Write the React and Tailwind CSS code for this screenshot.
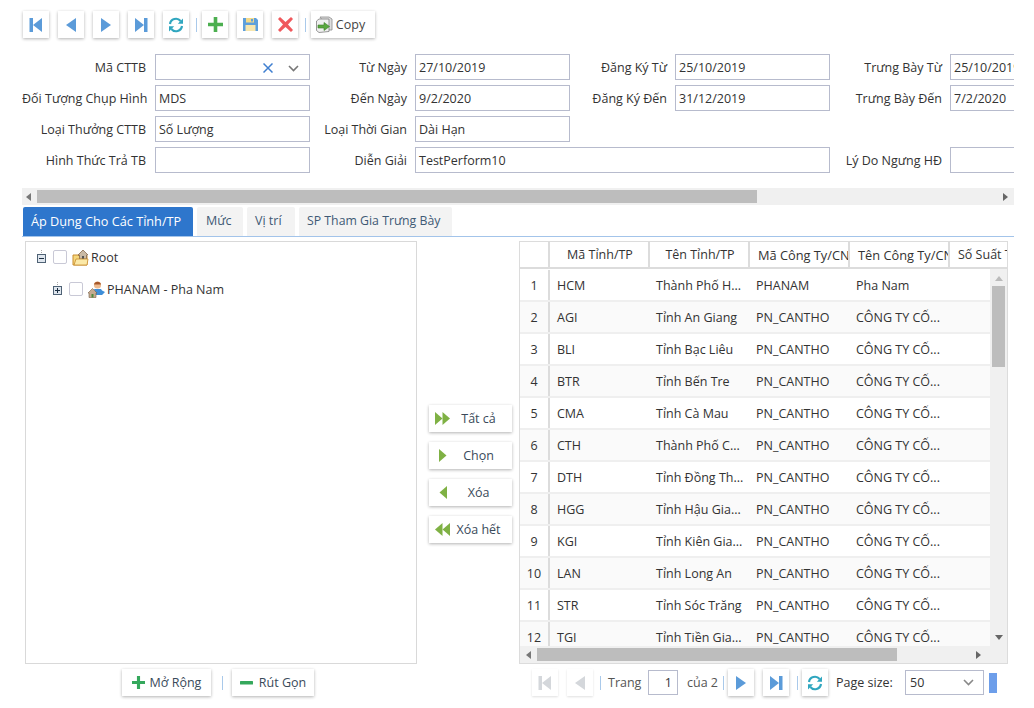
const font = { fontFamily: '"Open Sans", "Noto Sans", sans-serif' };

const Blue = "#5b9bd9";
const First = ({ c = Blue }) => (
  <svg width="14" height="16" viewBox="0 0 14 16"><rect x="0.5" y="1" width="3.5" height="14" fill={c} /><path d="M13 1v14L4 8z" fill={c} /></svg>
);
const Prev = ({ c = Blue }) => (
  <svg width="12" height="16" viewBox="0 0 12 16"><path d="M11 1v14L1 8z" fill={c} /></svg>
);
const Next = ({ c = Blue }) => (
  <svg width="12" height="16" viewBox="0 0 12 16"><path d="M1 1v14L11 8z" fill={c} /></svg>
);
const Last = ({ c = Blue }) => (
  <svg width="14" height="16" viewBox="0 0 14 16"><rect x="10" y="1" width="3.5" height="14" fill={c} /><path d="M1 1v14L10 8z" fill={c} /></svg>
);
const Refresh = () => (
  <svg width="16" height="16" viewBox="0 0 16 16" fill="none">
    <path d="M2 7A6 6 0 0 1 12.6 4" stroke="#2fa6bf" strokeWidth="2.2" />
    <path d="M15 1.5v5.2H9.8z" fill="#2fa6bf" />
    <path d="M14 9A6 6 0 0 1 3.4 12" stroke="#2fa6bf" strokeWidth="2.2" />
    <path d="M1 14.5V9.3h5.2z" fill="#2fa6bf" />
  </svg>
);
const Plus = ({ s = 15, c = "#4caf50" }) => (
  <svg width={s} height={s} viewBox="0 0 15 15"><path d="M5.7 0h3.6v5.7H15v3.6H9.3V15H5.7V9.3H0V5.7h5.7z" fill={c} /></svg>
);
const Minus = () => (
  <svg width="13" height="13" viewBox="0 0 13 13"><rect y="5" width="13" height="3.4" rx="0.5" fill="#35a85c" /></svg>
);
const Save = () => (
  <svg width="15" height="15" viewBox="0 0 15 15">
    <path d="M0 1h13l2 2v11H0z" fill="#5d9fdc" />
    <rect x="3" y="1" width="8" height="4.5" fill="#f2d98b" />
    <rect x="8" y="2" width="2" height="2.5" fill="#5d9fdc" />
    <rect x="2.5" y="8" width="10" height="6" fill="#f7e6ae" />
  </svg>
);
const Cross = () => (
  <svg width="15" height="15" viewBox="0 0 15 15"><path d="M2 0l5.5 5 5.5-5 2 2-5 5.5 5 5.5-2 2-5.5-5-5.5 5-2-2 5-5.5-5-5.5z" fill="#f0585c" /></svg>
);
const CopyIcon = () => (
  <svg width="17" height="17" viewBox="0 0 17 17">
    <path d="M4 1h9l3 2v11h-3z" fill="#dedede" stroke="#8a8a8a" strokeWidth="0.8" />
    <path d="M0.5 5l2.5-2h10v12.5l-10 1-2.5-2z" fill="#f0f0f0" stroke="#7d7d7d" strokeWidth="0.8" />
    <path d="M2 9h6V6.5l5.5 4-5.5 4V12H2z" fill="#5aa83f" stroke="#3c7d2a" strokeWidth="0.6" />
  </svg>
);
const ArrowsR = ({ two }) => (
  <svg width={two ? 15 : 8} height="13" viewBox={two ? "0 0 15 13" : "0 0 8 13"}>
    <path d="M0 0l7.5 6.5L0 13z" fill="#7fb144" />
    {two && <path d="M7.5 0L15 6.5 7.5 13z" fill="#7fb144" />}
  </svg>
);
const ArrowsL = ({ two }) => (
  <svg width={two ? 15 : 8} height="13" viewBox={two ? "0 0 15 13" : "0 0 8 13"}>
    <path d={two ? "M7.5 0L0 6.5 7.5 13z" : "M8 0L0.5 6.5 8 13z"} fill="#7fb144" />
    {two && <path d="M15 0L7.5 6.5 15 13z" fill="#7fb144" />}
  </svg>
);
const Chevron = ({ c = "#777" }) => (
  <svg width="11" height="7" viewBox="0 0 11 7" fill="none"><path d="M1 1l4.5 4.5L10 1" stroke={c} strokeWidth="1.6" /></svg>
);
const Tri = ({ d, c = "#666" }) => {
  const p = { l: "M5 0v8L0 4z", r: "M0 0v8l5-4z", u: "M0 5h8L4 0z", dn: "M0 0h8L4 5z" }[d];
  const w = d === "l" || d === "r" ? 5 : 8;
  const h = d === "l" || d === "r" ? 8 : 5;
  return <svg width={w} height={h} viewBox={`0 0 ${w} ${h}`}><path d={p} fill={c} /></svg>;
};
const Expander = ({ plus }) => (
  <svg width="9" height="14" viewBox="0 0 9 14" className="shrink-0">
    <path d="M4.5 0v4" stroke="#aaa" strokeDasharray="1 1" />
    <rect x="0.5" y="4.5" width="8" height="8" fill="#dfe6ee" stroke="#4f6275" />
    <path d="M2 8.5h5" stroke="#1c2f42" />
    {plus && <path d="M4.5 6v5" stroke="#1c2f42" />}
  </svg>
);
const FolderHouse = () => (
  <svg width="17" height="17" viewBox="0 0 17 17" className="shrink-0">
    <path d="M1 6h5l1 1h8v9H1z" fill="#f5d77d" stroke="#c98d2f" />
    <path d="M6 6l5-5 5 5h-1.5v4h-7V6z" fill="#c9b9a4" stroke="#8a6b4d" strokeWidth="0.8" />
    <rect x="10" y="7" width="2" height="3" fill="#555" />
    <path d="M4 10h12l-1 6H2z" fill="#fbe9a8" stroke="#c98d2f" strokeWidth="0.8" />
  </svg>
);
const PersonHouse = () => (
  <svg width="17" height="17" viewBox="0 0 17 17" className="shrink-0">
    <circle cx="9.5" cy="4" r="3.6" fill="#edbb90" />
    <path d="M6 3.4a3.6 3.6 0 0 1 7 0z" fill="#a5582a" />
    <path d="M6 8h7l1 1.5L17 11l-3 3H8z" fill="#3e8ed8" />
    <path d="M0 12l4.5-4.5L9 12H8v4.5H1V12z" fill="#c4aa90" stroke="#7a6148" strokeWidth="0.6" />
    <rect x="3.5" y="13" width="2" height="3.5" fill="#4f8a3c" />
  </svg>
);

const Btn = ({ children, className = "", faded }) => (
  <button className={`flex items-center justify-center h-[27px] bg-white shrink-0 ${faded ? "shadow-[0_1px_2px_rgba(0,0,0,0.12)]" : "shadow-[0_1px_3px_rgba(0,0,0,0.3)]"} ${className}`}>
    {children}
  </button>
);
const Sep = ({ h = "h-[14px]" }) => <div className={`w-px ${h} bg-[#a9c9ea] shrink-0`} />;

const Label = ({ children, first }) => (
  <div className={`text-right ${first ? "pr-[9px]" : "pr-[8px]"} pt-[2px] self-center whitespace-nowrap text-[#333]`}>{children}</div>
);
const Field = ({ children, className = "" }) => (
  <div className={`h-[26px] border border-[#b7bbcd] bg-white flex items-center px-[3px] pt-[2px] text-[#333] whitespace-nowrap overflow-hidden ${className}`}>{children}</div>
);

const rows = [
  ["1", "HCM", "Thành Phố H...", "PHANAM", "Pha Nam"],
  ["2", "AGI", "Tỉnh An Giang", "PN_CANTHO", "CÔNG TY CỐ..."],
  ["3", "BLI", "Tỉnh Bạc Liêu", "PN_CANTHO", "CÔNG TY CỐ..."],
  ["4", "BTR", "Tỉnh Bến Tre", "PN_CANTHO", "CÔNG TY CỐ..."],
  ["5", "CMA", "Tỉnh Cà Mau", "PN_CANTHO", "CÔNG TY CỐ..."],
  ["6", "CTH", "Thành Phố C...", "PN_CANTHO", "CÔNG TY CỐ..."],
  ["7", "DTH", "Tỉnh Đồng Th...", "PN_CANTHO", "CÔNG TY CỐ..."],
  ["8", "HGG", "Tỉnh Hậu Gia...", "PN_CANTHO", "CÔNG TY CỐ..."],
  ["9", "KGI", "Tỉnh Kiên Gia...", "PN_CANTHO", "CÔNG TY CỐ..."],
  ["10", "LAN", "Tỉnh Long An", "PN_CANTHO", "CÔNG TY CỐ..."],
  ["11", "STR", "Tỉnh Sóc Trăng", "PN_CANTHO", "CÔNG TY CỐ..."],
  ["12", "TGI", "Tỉnh Tiền Gia...", "PN_CANTHO", "CÔNG TY CỐ..."],
];

const Side = ({ icon, children }) => (
  <button className="flex items-center justify-center w-[83px] h-[27px] bg-white shadow-[0_1px_3px_rgba(0,0,0,0.3)] text-[#3a4a5a]">
    <span className="flex justify-center items-center w-[24px] shrink-0 pl-[3px]">{icon}</span>
    <span className="flex-1 text-center pr-[8px] pt-[2px] font-medium text-[12.5px] whitespace-nowrap">{children}</span>
  </button>
);

export default function App() {
  return (
    <div style={font} className="w-[1034px] h-[708px] overflow-hidden bg-white text-[12.5px] leading-none pl-[22px] pr-[20px] pt-[11px] text-[#333]">
      {/* Toolbar */}
      <div className="flex items-center ml-px h-[27px]">
        <div className="flex gap-[9px]">
          <Btn className="w-[26px]"><First /></Btn>
          <Btn className="w-[26px]"><Prev /></Btn>
          <Btn className="w-[26px]"><Next /></Btn>
          <Btn className="w-[26px]"><Last /></Btn>
          <Btn className="w-[26px]"><Refresh /></Btn>
        </div>
        <div className="ml-[7px] mr-[5px]"><Sep /></div>
        <div className="flex gap-[9px]">
          <Btn className="w-[26px]"><Plus /></Btn>
          <Btn className="w-[26px]"><Save /></Btn>
          <Btn className="w-[26px]"><Cross /></Btn>
        </div>
        <div className="ml-[7px] mr-[5px]"><Sep /></div>
        <Btn className="w-[64px] gap-[3px] font-medium text-[12.5px] text-[#444] pr-[5px]"><CopyIcon /><span className="pt-[2px]">Copy</span></Btn>
      </div>

      {/* Form */}
      <div className="overflow-hidden mt-[16px]">
        <div className="grid grid-cols-[133px_155px_105px_155px_105px_155px_120px_155px] gap-y-[5px] w-[1083px]">
          <Label first>Mã CTTB</Label>
          <Field className="border-[#2f7cc9] justify-between pr-[10px] pl-[3px] pt-0">
            <span />
            <span className="flex items-center gap-[15px]">
              <svg width="10" height="10" viewBox="0 0 10 10" fill="none"><path d="M0.5 0.5l9 9M9.5 0.5l-9 9" stroke="#3f7fd0" strokeWidth="1.5" /></svg>
              <Chevron />
            </span>
          </Field>
          <Label>Từ Ngày</Label><Field>27/10/2019</Field>
          <Label>Đăng Ký Từ</Label><Field>25/10/2019</Field>
          <Label>Trưng Bày Từ</Label><Field>25/10/2019</Field>

          <Label first>Đối Tượng Chụp Hình</Label><Field>MDS</Field>
          <Label>Đến Ngày</Label><Field>9/2/2020</Field>
          <Label>Đăng Ký Đến</Label><Field>31/12/2019</Field>
          <Label>Trưng Bày Đến</Label><Field>7/2/2020</Field>

          <Label first>Loại Thưởng CTTB</Label><Field>Số Lượng</Field>
          <Label>Loại Thời Gian</Label><Field>Dài Hạn</Field>
          <div className="col-span-4" />

          <Label first>Hình Thức Trả TB</Label><Field />
          <Label>Diễn Giải</Label><Field className="col-span-3">TestPerform10</Field>
          <Label>Lý Do Ngưng HĐ</Label><Field />
        </div>
      </div>

      {/* Form scrollbar */}
      <div className="mt-[15px] h-[17px] bg-[#f0f0f0] flex items-center">
        <div className="w-[15px] flex justify-center pr-[2px]"><Tri d="l" c="#777" /></div>
        <div className="w-[720px] h-[13px] bg-[#bdbdbd]" />
        <div className="flex-1 flex justify-end pr-[6px]"><Tri d="r" /></div>
      </div>

      {/* Tabs */}
      <div className="mt-[2px] h-[30px] flex items-stretch gap-[4px] pl-px border-b border-[#a3c4ea] text-[#3f5a75]">
        <div className="w-[170px] h-[29px] bg-[#2e76cc] text-white rounded-t-[2px] flex items-center pl-[8px] whitespace-nowrap text-[12.7px]">Áp Dụng Cho Các Tỉnh/TP</div>
        <div className="w-[46px] h-[29px] bg-[#f3f3f3] rounded-t-[2px] flex items-center pl-[9px]">Mức</div>
        <div className="w-[48px] h-[29px] bg-[#f3f3f3] rounded-t-[2px] flex items-center pl-[8px]">Vị trí</div>
        <div className="w-[153px] h-[29px] bg-[#f3f3f3] rounded-t-[2px] flex items-center pl-[8px] whitespace-nowrap text-[12.3px]">SP Tham Gia Trưng Bày</div>
      </div>

      {/* Panels */}
      <div className="flex mt-[4px] ml-[3px]">
        {/* Left */}
        <div className="w-[392px] shrink-0">
          <div className="h-[423px] border border-[#d9d9d9] pt-[5px] text-[#333]">
            <div className="flex items-center h-[20px] pl-[11px]">
              <Expander />
              <span className="ml-[7px] w-[14px] h-[14px] border border-[#c9c9d6] rounded-[2px] shrink-0" />
              <span className="ml-[5px]"><FolderHouse /></span>
              <span className="ml-[2px] pt-[2px]">Root</span>
            </div>
            <div className="flex items-center h-[20px] pl-[27px] mt-[12px]">
              <Expander plus />
              <span className="ml-[7px] w-[14px] h-[14px] border border-[#c9c9d6] rounded-[2px] shrink-0" />
              <span className="ml-[5px]"><PersonHouse /></span>
              <span className="ml-[2px] pt-[2px] whitespace-nowrap">PHANAM - Pha Nam</span>
            </div>
          </div>
          <div className="flex items-center justify-center mt-[5px] pl-[31px] pr-[37px]">
            <Btn className="w-[89px] h-[26px] gap-[5px] font-medium text-[12.5px] text-[#3a4a5a]"><Plus s={13} c="#35a85c" /><span className="pt-[2px]">Mở Rộng</span></Btn>
            <div className="ml-[11px] mr-[9px]"><Sep /></div>
            <Btn className="w-[82px] h-[26px] gap-[6px] font-medium text-[12.5px] text-[#3a4a5a]"><Minus /><span className="pt-[2px]">Rút Gọn</span></Btn>
          </div>
        </div>

        {/* Middle */}
        <div className="w-[102px] shrink-0 flex flex-col items-center gap-[10px] pt-[164px] pl-[5px]">
          <Side icon={<ArrowsR two />}>Tất cả</Side>
          <Side icon={<ArrowsR />}>Chọn</Side>
          <Side icon={<ArrowsL />}>Xóa</Side>
          <Side icon={<ArrowsL two />}>Xóa hết</Side>
        </div>

        {/* Right */}
        <div className="w-[489px] shrink-0">
          <div className="h-[423px] border border-[#dcdcdc] flex flex-col">
            <div className="h-[27px] flex border-b-2 border-[#dcdcdc] shrink-0 overflow-hidden pr-[17px]">
              <div className="w-[30px] border-r-2 border-[#dcdcdc] shrink-0" />
              {["Mã Tỉnh/TP", "Tên Tỉnh/TP"].map((h) => (
                <div key={h} className="w-[100px] shrink-0 border-r-2 border-[#dcdcdc] flex items-center justify-center pl-[2px] pt-[2px] whitespace-nowrap overflow-hidden">{h}</div>
              ))}
              {["Mã Công Ty/CN", "Tên Công Ty/CN"].map((h) => (
                <div key={h} className="w-[100px] shrink-0 border-r-2 border-[#dcdcdc] flex items-center pl-[8px] pt-[2px] whitespace-nowrap overflow-hidden text-[12.8px]">{h}</div>
              ))}
              <div className="w-[100px] shrink-0 flex items-center pl-[8px] pt-[2px] whitespace-nowrap overflow-hidden">Số Suất Trưng</div>
            </div>
            <div className="flex flex-1 min-h-0">
              <div className="flex-1 min-w-0 overflow-hidden pt-[1px]">
                {rows.map((r, i) => (
                  <div key={r[0]} className={`h-[32px] flex items-center border-b-2 border-[#efefef] ${i % 2 ? "bg-[#fafafa]" : "bg-white"}`}>
                    <div className="w-[30px] shrink-0 h-full flex items-center justify-center border-r-2 border-[#dcdcdc] pt-[2px]">{r[0]}</div>
                    <div className="w-[100px] shrink-0 pl-[7px] pt-[2px] whitespace-nowrap">{r[1]}</div>
                    <div className="w-[100px] shrink-0 pl-[6px] pt-[2px] whitespace-nowrap">{r[2]}</div>
                    <div className="w-[100px] shrink-0 pl-[6px] pt-[2px] whitespace-nowrap">{r[3]}</div>
                    <div className="w-[100px] shrink-0 pl-[6px] pt-[2px] whitespace-nowrap">{r[4]}</div>
                  </div>
                ))}
              </div>
              <div className="w-[17px] shrink-0 bg-[#f0f0f0] flex flex-col items-center pt-[7px]">
                <Tri d="u" c="#bbb" />
                <div className="w-[13px] h-[81px] bg-[#bdbdbd] mt-[5px]" />
                <div className="flex-1" />
                <div className="mb-[6px]"><Tri d="dn" /></div>
              </div>
            </div>
            <div className="h-[17px] shrink-0 flex items-center bg-[#f0f0f0]">
              <div className="w-[17px] flex justify-center"><Tri d="l" c="#777" /></div>
              <div className="w-[360px] h-[13px] bg-[#bdbdbd]" />
              <div className="flex-1 flex justify-end pr-[26px]"><Tri d="r" /></div>
            </div>
          </div>

          {/* Pager */}
          <div className="flex items-center mt-[5px] ml-[13px] h-[27px] text-[#555]">
            <Btn faded className="w-[26px]"><First c="#d4d7db" /></Btn>
            <Btn faded className="w-[26px] ml-[9px]"><Prev c="#d4d7db" /></Btn>
            <div className="ml-[7px]"><Sep /></div>
            <span className="ml-[7px] pt-[2px] w-[33px]">Trang</span>
            <div className="ml-[7px] w-[30px] h-[25px] border border-[#b7bbcd] flex items-center justify-end pr-[5px] pt-[2px] text-[#333]">1</div>
            <span className="ml-[9px] pt-[2px] w-[31px] whitespace-nowrap">của 2</span>
            <div className="ml-[5px]"><Sep /></div>
            <Btn className="w-[26px] ml-[4px]"><Next /></Btn>
            <Btn className="w-[26px] ml-[9px]"><Last /></Btn>
            <div className="ml-[8px]"><Sep /></div>
            <Btn className="w-[26px] ml-[4px]"><Refresh /></Btn>
            <span className="ml-[8px] w-[69px] pt-[2px] whitespace-nowrap text-[#333]">Page size:</span>
            <div className="w-[79px] h-[25px] border border-[#b7bbcd] flex items-center justify-between pl-[4px] pr-[9px] text-[#333]"><span className="pt-[2px]">50</span><Chevron c="#888" /></div>
            <div className="ml-[5px] w-[8px] h-[20px] bg-[#6d9eea]" />
          </div>
        </div>
      </div>
    </div>
  );
}
